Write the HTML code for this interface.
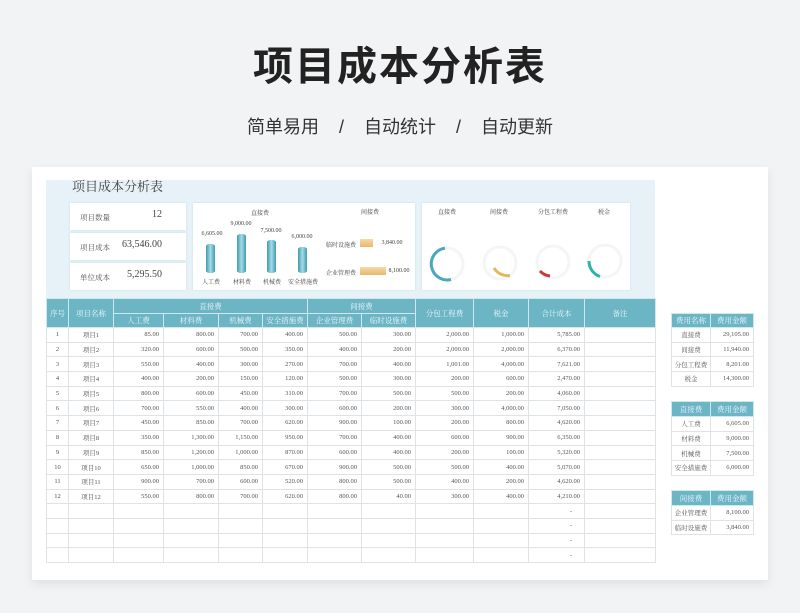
<!DOCTYPE html>
<html><head><meta charset="utf-8">
<style>
*{margin:0;padding:0;box-sizing:border-box}
body{width:800px;height:613px;background:#f1f3f5;font-family:"Liberation Serif","Noto Serif CJK SC",serif;position:relative;overflow:hidden;color:#555}
.abs{position:absolute}
.t1{left:0;width:800px;top:34px;text-align:center;font:bold 40px "Liberation Sans","Noto Sans CJK SC",sans-serif;color:#222;letter-spacing:2px}
.t2{left:0;width:800px;top:113px;text-align:center;font:18px "Liberation Sans","Noto Sans CJK SC",sans-serif;color:#333;word-spacing:0}
.card{left:32px;top:167px;width:736px;height:413px;background:#fff;box-shadow:0 4px 10px rgba(0,0,0,.08)}
.panel{left:46px;top:180px;width:609px;height:118px;background:#e6f2f7}
.wbox{background:#fff;box-shadow:0 0 2px rgba(150,190,200,.4)}
.stat{left:70px;width:116px;height:27px;font-size:7.5px;color:#555}
.stat span{position:absolute;left:10px;top:9px}
.stat b{position:absolute;right:24px;top:6px;font-weight:normal;font-size:10px;color:#444}
table{border-collapse:collapse;table-layout:fixed;font-size:6.5px}
td{border:1px solid #dde3e6;text-align:right;padding-right:4px;height:14.7px;white-space:nowrap;overflow:hidden;color:#555}
td.c{text-align:center;padding:0}
th{background:#6cb5c5;color:#eaf6f9;font-weight:normal;border:1px solid #cfe8ee;font-size:7.5px}
.sm td{text-align:center;padding:0;font-size:6.5px}
.sm td.r{text-align:right;padding-right:4px}
.lbl{font-size:6px;color:#444;text-align:center}
.bar{position:absolute;width:9px;border-radius:4px/2px;background:linear-gradient(90deg,#3d9bb0,#a7dbe6 50%,#3d9bb0)}
</style></head><body>
<div class="abs t1">项目成本分析表</div>
<div class="abs t2">简单易用&nbsp;&nbsp;&nbsp;&nbsp;/&nbsp;&nbsp;&nbsp;&nbsp;自动统计&nbsp;&nbsp;&nbsp;&nbsp;/&nbsp;&nbsp;&nbsp;&nbsp;自动更新</div>
<div class="abs card"></div>
<div class="abs panel"></div>
<div class="abs" style="left:72px;top:176px;font-size:13px;color:#444">项目成本分析表</div>
<div class="abs wbox stat" style="top:203px"><span>项目数量</span><b>12</b></div>
<div class="abs wbox stat" style="top:233px"><span>项目成本</span><b>63,546.00</b></div>
<div class="abs wbox stat" style="top:263px"><span>单位成本</span><b>5,295.50</b></div>
<div class="abs wbox" style="left:193px;top:203px;width:222px;height:87px"></div>
<div class="abs lbl" style="left:240px;top:208px;width:40px">直接费</div>
<div class="abs lbl" style="left:350px;top:207px;width:40px">间接费</div>
<div class="abs lbl" style="left:196px;top:231px;width:32px">6,605.00</div>
<div class="abs lbl" style="left:225px;top:221px;width:32px">9,000.00</div>
<div class="abs lbl" style="left:255px;top:228px;width:32px">7,500.00</div>
<div class="abs lbl" style="left:286px;top:234px;width:32px">6,000.00</div>
<div class="bar" style="left:206px;top:244px;height:29px"></div>
<div class="bar" style="left:237px;top:234px;height:39px"></div>
<div class="bar" style="left:267px;top:240px;height:33px"></div>
<div class="bar" style="left:298px;top:247px;height:26px"></div>
<div class="abs lbl" style="left:196px;top:277px;width:30px">人工费</div>
<div class="abs lbl" style="left:227px;top:277px;width:30px">材料费</div>
<div class="abs lbl" style="left:257px;top:277px;width:30px">机械费</div>
<div class="abs lbl" style="left:285px;top:277px;width:36px">安全措施费</div>
<div class="abs lbl" style="left:325px;top:240px;width:32px">临时设施费</div>
<div class="abs lbl" style="left:325px;top:268px;width:32px">企业管理费</div>
<div class="abs" style="left:360px;top:239px;width:13px;height:8px;background:linear-gradient(#f6d9a6,#e9b86a)"></div>
<div class="abs" style="left:360px;top:267px;width:26px;height:8px;background:linear-gradient(#f6d9a6,#e9b86a)"></div>
<div class="abs lbl" style="left:378px;top:240px;width:28px">3,840.00</div>
<div class="abs lbl" style="left:385px;top:268px;width:28px">8,100.00</div>
<div class="abs wbox" style="left:422px;top:203px;width:208px;height:87px"></div>
<div class="abs lbl" style="left:430px;top:207px;width:34px">直接费</div>
<div class="abs lbl" style="left:482px;top:207px;width:34px">间接费</div>
<div class="abs lbl" style="left:533px;top:207px;width:40px">分包工程费</div>
<div class="abs lbl" style="left:587px;top:207px;width:34px">税金</div>
<svg class="abs" style="left:422px;top:240px" width="208" height="50">
<g fill="none" stroke-width="3">
<circle cx="25" cy="24" r="16" stroke="#f3f5f6"/><circle cx="78" cy="23" r="16" stroke="#f3f5f6"/><circle cx="131" cy="22" r="16" stroke="#f3f5f6"/><circle cx="183" cy="21" r="16" stroke="#f3f5f6"/>
<path d="M29 39.5 A16 16 0 1 1 23 8.1" stroke="#4ba8bb"/>
<path d="M72 28 A16 16 0 0 0 88 35.5" stroke="#e7b55a"/>
<path d="M118 31 A16 16 0 0 0 128 36" stroke="#c8383e"/>
<path d="M167 21 A16 16 0 0 0 178 36.5" stroke="#2fb3a8"/>
</g></svg>
<table class="abs" style="left:46px;top:298px;width:609px">
<colgroup><col style="width:22px"><col style="width:45px"><col style="width:50px"><col style="width:55px"><col style="width:44px"><col style="width:45px"><col style="width:54px"><col style="width:54px"><col style="width:58px"><col style="width:55px"><col style="width:56px"><col style="width:71px"></colgroup>
<tr style="height:15px"><th rowspan="2">序号</th><th rowspan="2">项目名称</th><th colspan="4">直接费</th><th colspan="2">间接费</th><th rowspan="2">分包工程费</th><th rowspan="2">税金</th><th rowspan="2">合计成本</th><th rowspan="2">备注</th></tr>
<tr style="height:14px"><th>人工费</th><th>材料费</th><th>机械费</th><th>安全措施费</th><th>企业管理费</th><th>临时设施费</th></tr>
<tr><td class="c">1</td><td class="c">项目1</td><td>85.00</td><td>800.00</td><td>700.00</td><td>400.00</td><td>500.00</td><td>300.00</td><td>2,000.00</td><td>1,000.00</td><td>5,785.00</td><td></td></tr>
<tr><td class="c">2</td><td class="c">项目2</td><td>320.00</td><td>600.00</td><td>500.00</td><td>350.00</td><td>400.00</td><td>200.00</td><td>2,000.00</td><td>2,000.00</td><td>6,370.00</td><td></td></tr>
<tr><td class="c">3</td><td class="c">项目3</td><td>550.00</td><td>400.00</td><td>300.00</td><td>270.00</td><td>700.00</td><td>400.00</td><td>1,001.00</td><td>4,000.00</td><td>7,621.00</td><td></td></tr>
<tr><td class="c">4</td><td class="c">项目4</td><td>400.00</td><td>200.00</td><td>150.00</td><td>120.00</td><td>500.00</td><td>300.00</td><td>200.00</td><td>600.00</td><td>2,470.00</td><td></td></tr>
<tr><td class="c">5</td><td class="c">项目5</td><td>800.00</td><td>600.00</td><td>450.00</td><td>310.00</td><td>700.00</td><td>500.00</td><td>500.00</td><td>200.00</td><td>4,060.00</td><td></td></tr>
<tr><td class="c">6</td><td class="c">项目6</td><td>700.00</td><td>550.00</td><td>400.00</td><td>300.00</td><td>600.00</td><td>200.00</td><td>300.00</td><td>4,000.00</td><td>7,050.00</td><td></td></tr>
<tr><td class="c">7</td><td class="c">项目7</td><td>450.00</td><td>850.00</td><td>700.00</td><td>620.00</td><td>900.00</td><td>100.00</td><td>200.00</td><td>800.00</td><td>4,620.00</td><td></td></tr>
<tr><td class="c">8</td><td class="c">项目8</td><td>350.00</td><td>1,300.00</td><td>1,150.00</td><td>950.00</td><td>700.00</td><td>400.00</td><td>600.00</td><td>900.00</td><td>6,350.00</td><td></td></tr>
<tr><td class="c">9</td><td class="c">项目9</td><td>850.00</td><td>1,200.00</td><td>1,000.00</td><td>870.00</td><td>600.00</td><td>400.00</td><td>200.00</td><td>100.00</td><td>5,320.00</td><td></td></tr>
<tr><td class="c">10</td><td class="c">项目10</td><td>650.00</td><td>1,000.00</td><td>850.00</td><td>670.00</td><td>900.00</td><td>500.00</td><td>500.00</td><td>400.00</td><td>5,070.00</td><td></td></tr>
<tr><td class="c">11</td><td class="c">项目11</td><td>900.00</td><td>700.00</td><td>600.00</td><td>520.00</td><td>800.00</td><td>500.00</td><td>400.00</td><td>200.00</td><td>4,620.00</td><td></td></tr>
<tr><td class="c">12</td><td class="c">项目12</td><td>550.00</td><td>800.00</td><td>700.00</td><td>620.00</td><td>800.00</td><td>40.00</td><td>300.00</td><td>400.00</td><td>4,210.00</td><td></td></tr>
<tr><td></td><td></td><td></td><td></td><td></td><td></td><td></td><td></td><td></td><td></td><td style="padding-right:12px">-</td><td></td></tr>
<tr><td></td><td></td><td></td><td></td><td></td><td></td><td></td><td></td><td></td><td></td><td style="padding-right:12px">-</td><td></td></tr>
<tr><td></td><td></td><td></td><td></td><td></td><td></td><td></td><td></td><td></td><td></td><td style="padding-right:12px">-</td><td></td></tr>
<tr><td></td><td></td><td></td><td></td><td></td><td></td><td></td><td></td><td></td><td></td><td style="padding-right:12px">-</td><td></td></tr>
</table>
<table class="abs sm" style="left:671px;top:313px;width:82px">
<colgroup><col style="width:39px"><col style="width:43px"></colgroup>
<tr style="height:14px"><th>费用名称</th><th>费用金额</th></tr>
<tr><td>直接费</td><td class="r">29,105.00</td></tr>
<tr><td>间接费</td><td class="r">11,940.00</td></tr>
<tr><td>分包工程费</td><td class="r">8,201.00</td></tr>
<tr><td>税金</td><td class="r">14,300.00</td></tr>
</table>
<table class="abs sm" style="left:671px;top:401px;width:82px">
<colgroup><col style="width:39px"><col style="width:43px"></colgroup>
<tr style="height:15px"><th>直接费</th><th>费用金额</th></tr>
<tr><td>人工费</td><td class="r">6,605.00</td></tr>
<tr><td>材料费</td><td class="r">9,000.00</td></tr>
<tr><td>机械费</td><td class="r">7,500.00</td></tr>
<tr><td>安全措施费</td><td class="r">6,000.00</td></tr>
</table>
<table class="abs sm" style="left:671px;top:490px;width:82px">
<colgroup><col style="width:39px"><col style="width:43px"></colgroup>
<tr style="height:15px"><th>间接费</th><th>费用金额</th></tr>
<tr><td>企业管理费</td><td class="r">8,100.00</td></tr>
<tr><td>临时设施费</td><td class="r">3,840.00</td></tr>
</table>
</body></html>
